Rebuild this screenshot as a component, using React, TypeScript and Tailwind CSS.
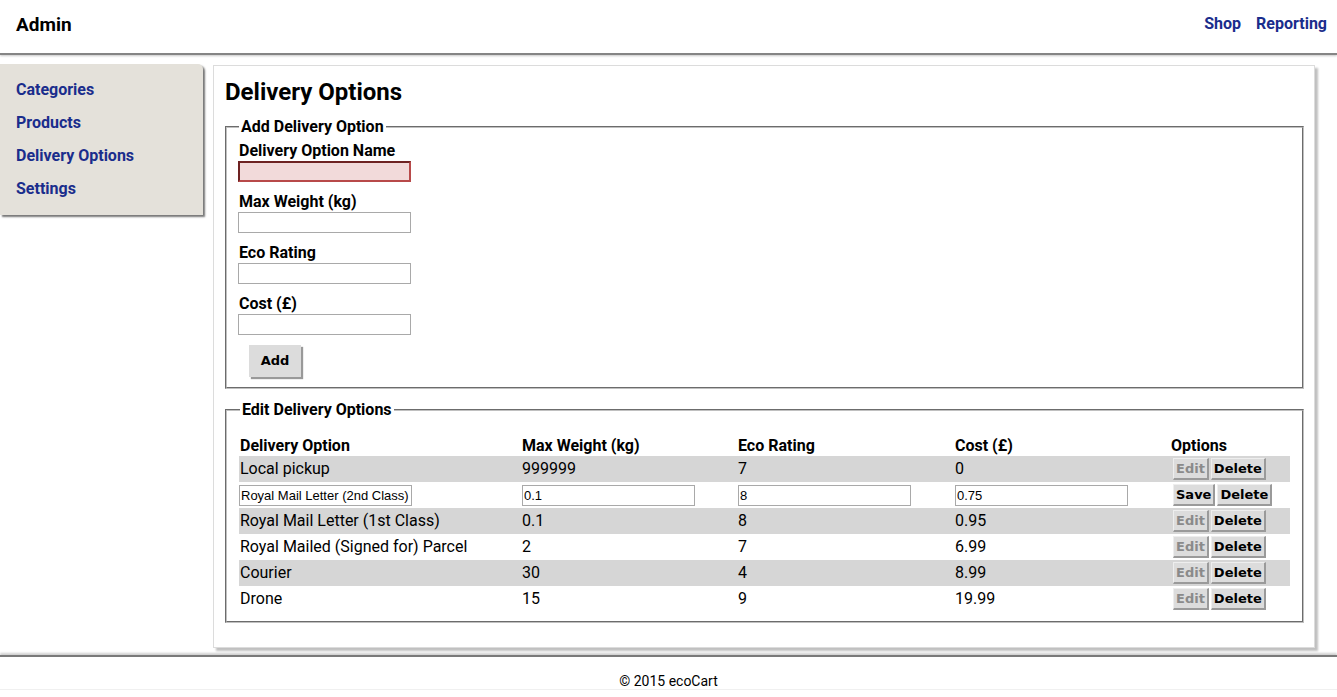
import React from "react";

const rows = [
  { name: "Local pickup", weight: "999999", eco: "7", cost: "0" },
  { name: "Royal Mail Letter (2nd Class)", weight: "0.1", eco: "8", cost: "0.75", editing: true },
  { name: "Royal Mail Letter (1st Class)", weight: "0.1", eco: "8", cost: "0.95" },
  { name: "Royal Mailed (Signed for) Parcel", weight: "2", eco: "7", cost: "6.99" },
  { name: "Courier", weight: "30", eco: "4", cost: "8.99" },
  { name: "Drone", weight: "15", eco: "9", cost: "19.99" },
];

const btn =
  "h-[22px] px-[2px] bg-[#dcdcdc] border-t border-l border-[#eee] border-r-2 border-b-2 border-r-[#9a9a9a] border-b-[#9a9a9a] text-[13px] font-bold leading-none font-['DejaVu_Sans',sans-serif]";

const grid = "grid grid-cols-[283px_216px_217px_216px_1fr] items-center";

const cellInput = "w-[173px] h-[21px] border border-[#a9a9a9] px-[1px] text-[13px] bg-white font-['Liberation_Sans',sans-serif]";

const Field = ({ label, error }: { label: string; error?: boolean }) => (
  <div className="mb-[10px]">
    <div className="h-[20px] leading-[20px] text-[16px] font-bold pl-[1px]">{label}</div>
    <input
      className={
        error
          ? "block w-[173px] h-[21px] bg-[#f2dada] border-2 border-[#b84a4a] border-t-[#6e2222] border-l-[#6e2222]"
          : "block w-[173px] h-[21px] bg-white border border-[#a9a9a9]"
      }
    />
  </div>
);

export default function App() {
  return (
    <div className="min-h-screen bg-white text-black font-['Roboto',sans-serif]">
      <header className="h-[55px] flex items-center justify-between pl-4 pr-[10px] border-b-2 border-[#858585] shadow-[0_1px_2px_#c8c8c8]">
        <div className="text-[19px] font-bold -mt-[3px]">Admin</div>
        <nav className="flex gap-[15px] text-[16px] font-bold text-[#1a2d8c] -mt-[5px]">
          <a>Shop</a>
          <a>Reporting</a>
        </nav>
      </header>

      <div className="flex items-start mt-[9px] mr-[22px]">
        <aside className="w-[203px] shrink-0 bg-[#e4e1da] rounded-tr-[5px] pt-[9px] pb-[10px] shadow-[2px_2px_2px_#777]">
          {["Categories", "Products", "Delivery Options", "Settings"].map((l) => (
            <div key={l} className="h-[33px] leading-[33px] pl-4 text-[16px] font-bold text-[#1a2d8c]">
              {l}
            </div>
          ))}
        </aside>

        <main className="ml-[10px] mt-[1px] flex-1 bg-white border border-[#dcdcdc] shadow-[3px_3px_2px_#c0c0c0] pt-[12px] pl-[11px] pr-[10px] pb-[24px]">
          <h1 className="text-[24px] leading-[28px] font-bold mb-[11px]">Delivery Options</h1>

          <fieldset className="border-2 border-[#c0c0c0] [border-style:groove] pl-[11px] pr-3">
            <legend className="px-[2px] text-[16px] font-bold leading-[20px] ml-[1px]">Add Delivery Option</legend>
            <div className="pt-[4px]">
              <Field label="Delivery Option Name" error />
              <Field label="Max Weight (kg)" />
              <Field label="Eco Rating" />
              <Field label="Cost (£)" />
              <button className="ml-[11px] mb-[10px] w-[52px] h-[32px] bg-[#dcdcdc] shadow-[2px_2px_1px_#999] text-[13px] font-bold font-['DejaVu_Sans',sans-serif]">
                Add
              </button>
            </div>
          </fieldset>

          <fieldset className="mt-[11px] border-2 border-[#c0c0c0] [border-style:groove] pl-[12px] pr-[12px] pb-[9px]">
            <legend className="px-[2px] text-[16px] font-bold leading-[20px] ml-[1px]">Edit Delivery Options</legend>
            <div className="pt-[14px] text-[16px]">
              <div className={`${grid} h-[22px] font-bold`}>
                <div className="pl-[1px]">Delivery Option</div>
                <div>Max Weight (kg)</div>
                <div>Eco Rating</div>
                <div>Cost (£)</div>
                <div>Options</div>
              </div>
              {rows.map((r, i) => (
                <div key={r.name} className={`${grid} h-[26px] ${i % 2 === 0 ? "bg-[#d6d6d6]" : "bg-white"}`}>
                  {r.editing ? (
                    <>
                      <div>
                        <input defaultValue={r.name} className={`${cellInput} w-[172px]`} />
                      </div>
                      <div>
                        <input defaultValue={r.weight} className={cellInput} />
                      </div>
                      <div>
                        <input defaultValue={r.eco} className={cellInput} />
                      </div>
                      <div>
                        <input defaultValue={r.cost} className={cellInput} />
                      </div>
                      <div className="flex gap-[2px] pl-[2px]">
                        <button className={btn}>Save</button>
                        <button className={btn}>Delete</button>
                      </div>
                    </>
                  ) : (
                    <>
                      <div className="pl-[1px]">{r.name}</div>
                      <div>{r.weight}</div>
                      <div>{r.eco}</div>
                      <div>{r.cost}</div>
                      <div className="flex gap-[2px] pl-[2px]">
                        <button className={`${btn} text-[#8a8a8a]`}>Edit</button>
                        <button className={btn}>Delete</button>
                      </div>
                    </>
                  )}
                </div>
              ))}
            </div>
          </fieldset>
        </main>
      </div>

      <footer className="mt-[7px] border-t-2 border-[#7a7a7a] shadow-[0_-2px_2px_#d0d0d0] h-[35px] border-b border-b-[#f0f0f0] flex items-center justify-center pt-[16px] text-[14px]">
        © 2015 ecoCart
      </footer>
    </div>
  );
}
